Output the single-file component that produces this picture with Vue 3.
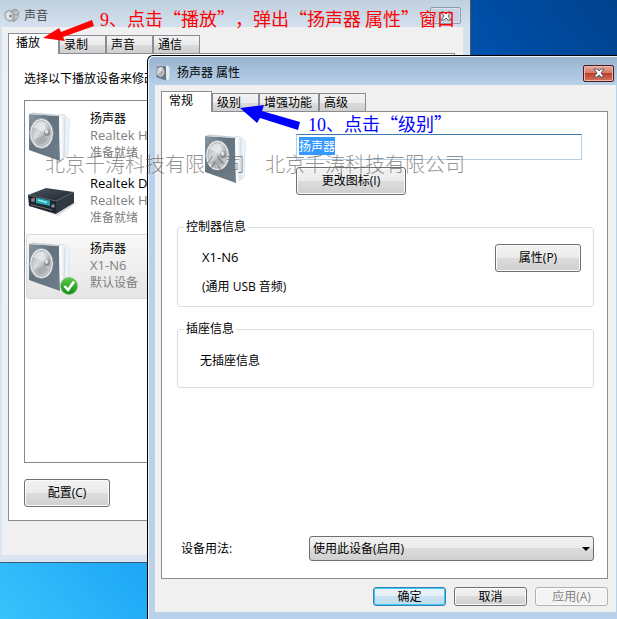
<template>
  <div class="desktop">
    <!-- shared icon shapes -->
    <svg class="defs" aria-hidden="true">
      <defs>
        <linearGradient id="face" x1="0" y1="0" x2="1" y2="1">
          <stop offset="0" stop-color="#8a97a1" />
          <stop offset="0.4" stop-color="#62727f" />
          <stop offset="1" stop-color="#6f7e8a" />
        </linearGradient>
        <linearGradient id="side" x1="0" y1="0" x2="1" y2="0">
          <stop offset="0" stop-color="#ffffff" />
          <stop offset="0.5" stop-color="#e4ebf1" />
          <stop offset="1" stop-color="#f7fafc" />
        </linearGradient>
        <linearGradient id="cone" x1="0" y1="0" x2="1" y2="1">
          <stop offset="0" stop-color="#a4a8ab" />
          <stop offset="0.4" stop-color="#d8dadc" />
          <stop offset="0.6" stop-color="#b4b7ba" />
          <stop offset="1" stop-color="#d0d3d5" />
        </linearGradient>
        <linearGradient id="boxTop" x1="0" y1="0" x2="1" y2="1">
          <stop offset="0" stop-color="#4b5560" />
          <stop offset="1" stop-color="#1d242b" />
        </linearGradient>
        <linearGradient id="tick" x1="0" y1="0" x2="0" y2="1">
          <stop offset="0" stop-color="#5fc94c" />
          <stop offset="1" stop-color="#0f8a16" />
        </linearGradient>
      </defs>
      <symbol id="speaker" viewBox="0 0 42 50">
        <path d="M31 3 Q35 1 38 4 L41.5 7 L40 43 Q39 45 36 46 L32 48 Z" fill="url(#side)" stroke="#d3dce4" stroke-width="0.7" />
        <path d="M37 6 L36 45" stroke="#ccd8e2" stroke-width="0.8" />
        <path d="M1 2 L31 4 L32 49 L1 38 Z" fill="url(#face)" />
        <path d="M1 2 L31 4 L34 3 L5 0.5 Z" fill="#c9d1d8" />
        <path d="M31 4 L34 3 L34 48 L32 49 Z" fill="#f8fafb" />
        <ellipse cx="13.5" cy="21.5" rx="11.7" ry="15" fill="#f0f1f2" stroke="#8b969f" stroke-width="0.7" />
        <ellipse cx="13.5" cy="21.5" rx="9.8" ry="13" fill="url(#cone)" stroke="#aaaeb1" stroke-width="0.8" />
        <path d="M5 15 Q10 8 15 10 L19 18 L16 20 Z" fill="#f1f2f3" opacity="0.6" />
        <path d="M6 28 L16 23 L20 28 Q14 36 6 28" fill="#8f9396" opacity="0.35" />
        <ellipse cx="19" cy="20.5" rx="3" ry="3.6" fill="#85898c" />
        <ellipse cx="18.5" cy="19.5" rx="2" ry="2.3" fill="#dcdee0" />
      </symbol>
      <symbol id="receiver" viewBox="0 0 50 28">
        <path d="M2 18 L29 26 L50 13 L46 17 L30 28 Z" fill="#b9bdc1" opacity="0.5" />
        <path d="M18 0 L46 4 L28 13 L0 7 Z" fill="url(#boxTop)" />
        <path d="M0 7 L28 13 L28 26 L1 18 Z" fill="#1e252c" />
        <path d="M28 13 L46 4 L46 15 L28 26 Z" fill="#303942" />
        <path d="M0 7 L28 13 L46 4" fill="none" stroke="#59636d" stroke-width="0.7" />
        <path d="M8 9.5 L22 12.5 L22 18 L8 15 Z" fill="#2ba5b4" />
        <path d="M10 12 L19 14.5" stroke="#95f0ee" stroke-width="1.5" />
        <circle cx="5" cy="12" r="2" fill="#7b858e" />
        <circle cx="6" cy="10.5" r="1" fill="#e23a3a" />
        <circle cx="25" cy="18" r="1.8" fill="#89939c" />
        <path d="M3 16.5 L24 22" stroke="#69747d" stroke-width="1" />
      </symbol>
    </svg>

    <!-- sound window -->
    <section class="window sound">
      <header class="titlebar">
        <svg class="title-icon" viewBox="0 0 16 16">
          <path d="M8 2 L12 1 L15 4 L14 10 L10 14 L7 12 Z" fill="#aab1b7" stroke="#8c949b" stroke-width="0.7" />
          <path d="M10 5 L14 4 M9 9 L14 9" stroke="#d5dadd" />
          <ellipse cx="5.5" cy="8" rx="4.5" ry="5.5" fill="#b8bec3" stroke="#8d959c" stroke-width="0.7" transform="rotate(-18 5 8)" />
          <ellipse cx="5" cy="8" rx="3" ry="4" fill="#e1e5e8" transform="rotate(-18 5 8)" />
          <circle cx="6.5" cy="8" r="1.5" fill="#858d94" />
        </svg>
        <h1>声音</h1>
        <button class="close faded" aria-label="关闭">
          <svg viewBox="0 0 12 10"><path d="M1 1 H4 L6 3 L8 1 H11 L8 5 L11 9 H8 L6 7 L4 9 H1 L4 5 Z" /></svg>
        </button>
      </header>
      <div class="client">
        <nav class="tabs">
          <button v-for="(tab, i) in soundTabs" :key="tab" :class="{ active: i === 0 }">{{ tab }}</button>
        </nav>
        <div class="panel">
          <p class="hint">选择以下播放设备来修改</p>
          <ul class="devices">
            <li v-for="(d, i) in devices" :key="i" :class="{ selected: d.isDefault }">
              <div class="device-icon">
                <svg :class="d.icon"><use :href="'#' + d.icon" /></svg>
                <svg v-if="d.isDefault" class="badge" viewBox="0 0 18 18">
                  <circle cx="9" cy="9" r="8.5" fill="url(#tick)" stroke="#7fbf7a" stroke-width="0.7" />
                  <path d="M4.5 9 L8 13 L14 4.5" fill="none" stroke="#fff" stroke-width="2.6" />
                </svg>
              </div>
              <div class="device-text">
                <strong :class="{ latin: d.icon === 'receiver' }">{{ d.name }}</strong>
                <span class="latin">{{ d.driver }}</span>
                <span>{{ d.status }}</span>
              </div>
            </li>
          </ul>
          <button class="btn">配置(C)</button>
        </div>
      </div>
    </section>

    <!-- speaker properties dialog -->
    <section class="window dialog">
      <header class="titlebar">
        <svg class="title-icon"><use href="#speaker" /></svg>
        <h2>扬声器 属性</h2>
        <button class="close" aria-label="关闭">
          <svg viewBox="0 0 12 10"><path d="M1 1 H4 L6 3 L8 1 H11 L8 5 L11 9 H8 L6 7 L4 9 H1 L4 5 Z" /></svg>
        </button>
      </header>
      <div class="client">
        <nav class="tabs">
          <button v-for="(tab, i) in dialogTabs" :key="tab" :class="{ active: i === 0 }">{{ tab }}</button>
        </nav>
        <div class="panel">
          <div class="identity">
            <svg class="speaker"><use href="#speaker" /></svg>
            <div class="identity-fields">
              <input ref="nameInput" v-model="deviceName" type="text" aria-label="扬声器" />
              <button class="btn wide">更改图标(I)</button>
            </div>
          </div>
          <fieldset class="controller">
            <legend>控制器信息</legend>
            <div class="row">
              <div>
                <p class="latin">X1-N6</p>
                <p>(通用 USB 音频)</p>
              </div>
              <button class="btn">属性(P)</button>
            </div>
          </fieldset>
          <fieldset class="jack">
            <legend>插座信息</legend>
            <p>无插座信息</p>
          </fieldset>
          <div class="usage">
            <label for="usage">设备用法:</label>
            <div class="select">
              <select id="usage">
                <option>使用此设备(启用)</option>
              </select>
              <svg viewBox="0 0 8 4"><path d="M0 0 H8 L4 4 Z" /></svg>
            </div>
          </div>
        </div>
        <footer>
          <button class="btn small default">确定</button>
          <button class="btn small">取消</button>
          <button class="btn small" disabled>应用(A)</button>
        </footer>
      </div>
    </section>

    <!-- watermark and step notes -->
    <p class="watermark">北京千涛科技有限公司　北京千涛科技有限公司</p>
    <p class="note red"><span>9</span>、点击“播放”，弹出“扬声器 属性”窗口</p>
    <p class="note blue"><span>10</span>、点击“级别”</p>
    <svg class="arrow red-arrow" viewBox="0 0 52 24">
      <path d="M0 19 L16 9 L18 13 L49 1 L51 7 L20 18 L22 22 Z" fill="#f00" />
    </svg>
    <svg class="arrow blue-arrow" viewBox="0 0 60 26">
      <path d="M0 3 L24 0 L22 6 L60 17 L58 25 L20 13 L17 18 Z" fill="#00f" />
    </svg>
  </div>
</template>

<script setup>
import { ref, onMounted } from 'vue';

const soundTabs = ['播放', '录制', '声音', '通信'];
const dialogTabs = ['常规', '级别', '增强功能', '高级'];

const devices = [
  { name: '扬声器', driver: 'Realtek H', status: '准备就绪', icon: 'speaker' },
  { name: 'Realtek D', driver: 'Realtek H', status: '准备就绪', icon: 'receiver' },
  { name: '扬声器', driver: 'X1-N6', status: '默认设备', icon: 'speaker', isDefault: true },
];

const deviceName = ref('扬声器');
const nameInput = ref(null);

// the name starts out selected, ready to be typed over
onMounted(() => {
  nameInput.value.focus();
  nameInput.value.select();
});
</script>

<style>
body {
  margin: 0;
}
</style>

<style scoped>
* {
  box-sizing: border-box;
  margin: 0;
  padding: 0;
}

.desktop {
  position: relative;
  min-height: 100vh;
  overflow: hidden;
  font-family: "Open Sans", "Noto Sans CJK SC", sans-serif;
  font-size: 12px;
  line-height: 18px;
  color: #000;
  background: linear-gradient(50deg, #38c3fb 0%, #18a0f6 20%, #0a6fce 50%, #0052b0 82%, #00428c 100%);
}

button,
input,
select {
  font: inherit;
  color: inherit;
}

.defs {
  position: absolute;
  width: 0;
  height: 0;
}

/* windows */
.window {
  position: absolute;
  display: flex;
  flex-direction: column;
}

.sound {
  top: 0;
  left: 0;
  width: 471px;
  height: 563px;
  padding: 0 7px 7px 2px;
  border-right: 1px solid #4b5a68;
  border-bottom: 1px solid #3c5a70;
  background: linear-gradient(#c0d0df, #d5e1ed 28px, #d9e5f0);
}

.dialog {
  top: 55px;
  left: 147px;
  right: 0;
  bottom: 0;
  padding: 0 1px 7px 7px;
  border: 1px solid #000;
  border-width: 1px 0 0 1px;
  border-radius: 6px 0 0 0;
  background: linear-gradient(#98b2cf, #b9d1ea 30px);
  box-shadow: inset 1px 1px 0 #eef5fc;
}

.titlebar {
  display: flex;
  align-items: center;
}

.sound .titlebar {
  height: 27px;
  padding: 4px 2px 0 2px;
  color: #444;
}

.dialog .titlebar {
  height: 29px;
  padding: 5px 2px 0 0;
}

.titlebar h1,
.titlebar h2 {
  flex: 1;
  font-size: 12px;
  font-weight: normal;
}

.title-icon {
  width: 16px;
  height: 16px;
  margin-right: 4px;
}

.dialog .title-icon {
  margin-right: 6px;
}

.close {
  display: flex;
  align-items: center;
  justify-content: center;
  width: 31px;
  height: 17px;
  border: 1px solid #4b1c1c;
  border-radius: 2px;
  background: linear-gradient(#e8a99e, #d6796a 45%, #bf3f2c 50%, #d4745c);
  box-shadow: inset 0 0 0 1px #eeb5aa;
}

.close svg {
  flex: none;
  width: 12px;
  height: 10px;
  fill: #fff;
  stroke: #555c6c;
}

.close.faded {
  border-color: #8b9cb0;
  background: #c5d3e1;
  box-shadow: inset 0 0 0 1px #d8e3ee;
}

.client {
  flex: 1;
  display: flex;
  flex-direction: column;
  background: #f0f0f0;
}

.sound .client {
  padding: 6px 8px 34px 6px;
}

.dialog .client {
  padding: 6px 8px 6px 6px;
}

/* tabs */
.tabs {
  display: flex;
  align-items: flex-end;
}

.tabs button {
  height: 18px;
  padding: 0 17px 0 4px;
  border: 1px solid #898c95;
  border-width: 1px 1px 0 1px;
  line-height: 18px;
  background: linear-gradient(#f3f3f3, #ebebeb 50%, #dcdcdc 52%, #cfcfcf);
}

.dialog .tabs button:nth-child(3) {
  padding-right: 6px;
}

.tabs .active {
  position: relative;
  height: 21px;
  margin-bottom: -1px;
  padding: 0 18px 2px 7px;
  background: #fff;
}

.panel {
  flex: 1;
  display: flex;
  flex-direction: column;
  border: 1px solid #898c95;
  background: #fff;
}

/* sound window content */
.sound .panel {
  align-items: flex-start;
  padding: 16px 14px 13px 15px;
}

.hint {
  white-space: nowrap;
}

.devices {
  flex: 1;
  align-self: stretch;
  margin: 12px 0 16px;
  padding: 3px 1px;
  border: 1px solid #828790;
  list-style: none;
}

.devices li {
  display: flex;
  height: 65px;
  padding: 5px 1px;
  border: 1px solid transparent;
  border-radius: 3px;
}

.devices .selected {
  border-color: #d9d9d9;
  background: linear-gradient(#f8f8f8, #e5e5e5);
}

.device-icon {
  position: relative;
  display: flex;
  align-items: center;
  width: 50px;
  margin-right: 12px;
}

.speaker {
  width: 42px;
  height: 50px;
}

.receiver {
  width: 50px;
  height: 28px;
}

.badge {
  position: absolute;
  right: 0;
  bottom: -2px;
  width: 18px;
  height: 18px;
}

.device-text {
  display: flex;
  flex-direction: column;
  line-height: 17px;
  color: #808080;
  white-space: nowrap;
}

.device-text strong {
  font-weight: normal;
  color: #000;
}

.latin {
  font-size: 13px;
}

/* push buttons */
.btn {
  width: 86px;
  height: 28px;
  border: 1px solid #707070;
  border-radius: 3px;
  background: linear-gradient(#f2f2f2, #ebebeb 48%, #dddddd 50%, #cfcfcf);
  box-shadow: inset 0 0 0 1px #fbfbfb;
}

.btn.wide {
  width: 110px;
}

.btn.small {
  width: 73px;
  height: 19px;
  line-height: 16px;
}

.btn.default {
  border-color: #3c7fb1;
  background: linear-gradient(#eef5f9, #e2eff7 48%, #cbe3f1 50%, #bcdcee);
  box-shadow: inset 0 0 0 1px #35cdf5;
}

.btn:disabled {
  border-color: #adb2b5;
  color: #838383;
  background: #f4f4f4;
}

/* dialog content */
.dialog .panel {
  padding: 22px 13px 17px 15px;
}

.identity {
  display: flex;
  gap: 50px;
  padding: 0 12px 0 27px;
}

.identity-fields {
  flex: 1;
  display: flex;
  flex-direction: column;
  gap: 7px;
}

input {
  width: 100%;
  height: 26px;
  padding: 0 2px 2px;
  border: 1px solid #b5cfe7;
  border-top-color: #3d7bad;
  outline: none;
  background: #fff;
}

input::selection {
  color: #fff;
  background: #3399ff;
}

fieldset {
  border: 1px solid #d5dfe5;
  border-radius: 3px;
}

legend {
  margin-left: 6px;
  padding: 0 2px;
}

.controller {
  height: 89px;
  margin-top: 23px;
}

.row {
  display: flex;
  justify-content: space-between;
  padding: 8px 12px 0 24px;
}

.row p {
  margin: 4px 0 12px;
}

.jack {
  height: 68px;
  margin-top: 13px;
}

.jack p {
  padding: 14px 22px;
}

.usage {
  display: flex;
  align-items: center;
  margin-top: auto;
  padding-left: 4px;
}

.usage label {
  width: 128px;
}

.select {
  position: relative;
  flex: 1;
  display: flex;
}

.select select {
  flex: 1;
  height: 25px;
  padding: 0 3px;
  border: 1px solid #707070;
  border-radius: 3px;
  appearance: none;
  background: linear-gradient(#f2f2f2, #ebebeb 48%, #dddddd 50%, #cfcfcf);
}

.select svg {
  position: absolute;
  top: 11px;
  right: 4px;
  width: 8px;
  height: 4px;
  pointer-events: none;
}

footer {
  display: flex;
  justify-content: flex-end;
  gap: 8px;
  padding-top: 8px;
}

/* overlays */
.watermark,
.note {
  position: absolute;
  font-family: "Noto Sans CJK SC", sans-serif;
  white-space: nowrap;
}

.watermark {
  top: 152px;
  left: 45px;
  font-size: 20px;
  font-weight: 300;
  line-height: 24px;
  color: rgba(110, 110, 110, 0.75);
}

.note {
  font-size: 18px;
  line-height: 24px;
  text-spacing-trim: space-all;
}

.note span {
  font-family: "Liberation Serif", serif;
}

.note.red {
  top: 6px;
  left: 100px;
  color: #f00;
}

.note.blue {
  top: 111px;
  left: 308px;
  color: #00f;
}

.arrow {
  position: absolute;
}

.red-arrow {
  top: 19px;
  left: 43px;
  width: 52px;
  height: 24px;
}

.blue-arrow {
  top: 105px;
  left: 240px;
  width: 60px;
  height: 26px;
}
</style>
